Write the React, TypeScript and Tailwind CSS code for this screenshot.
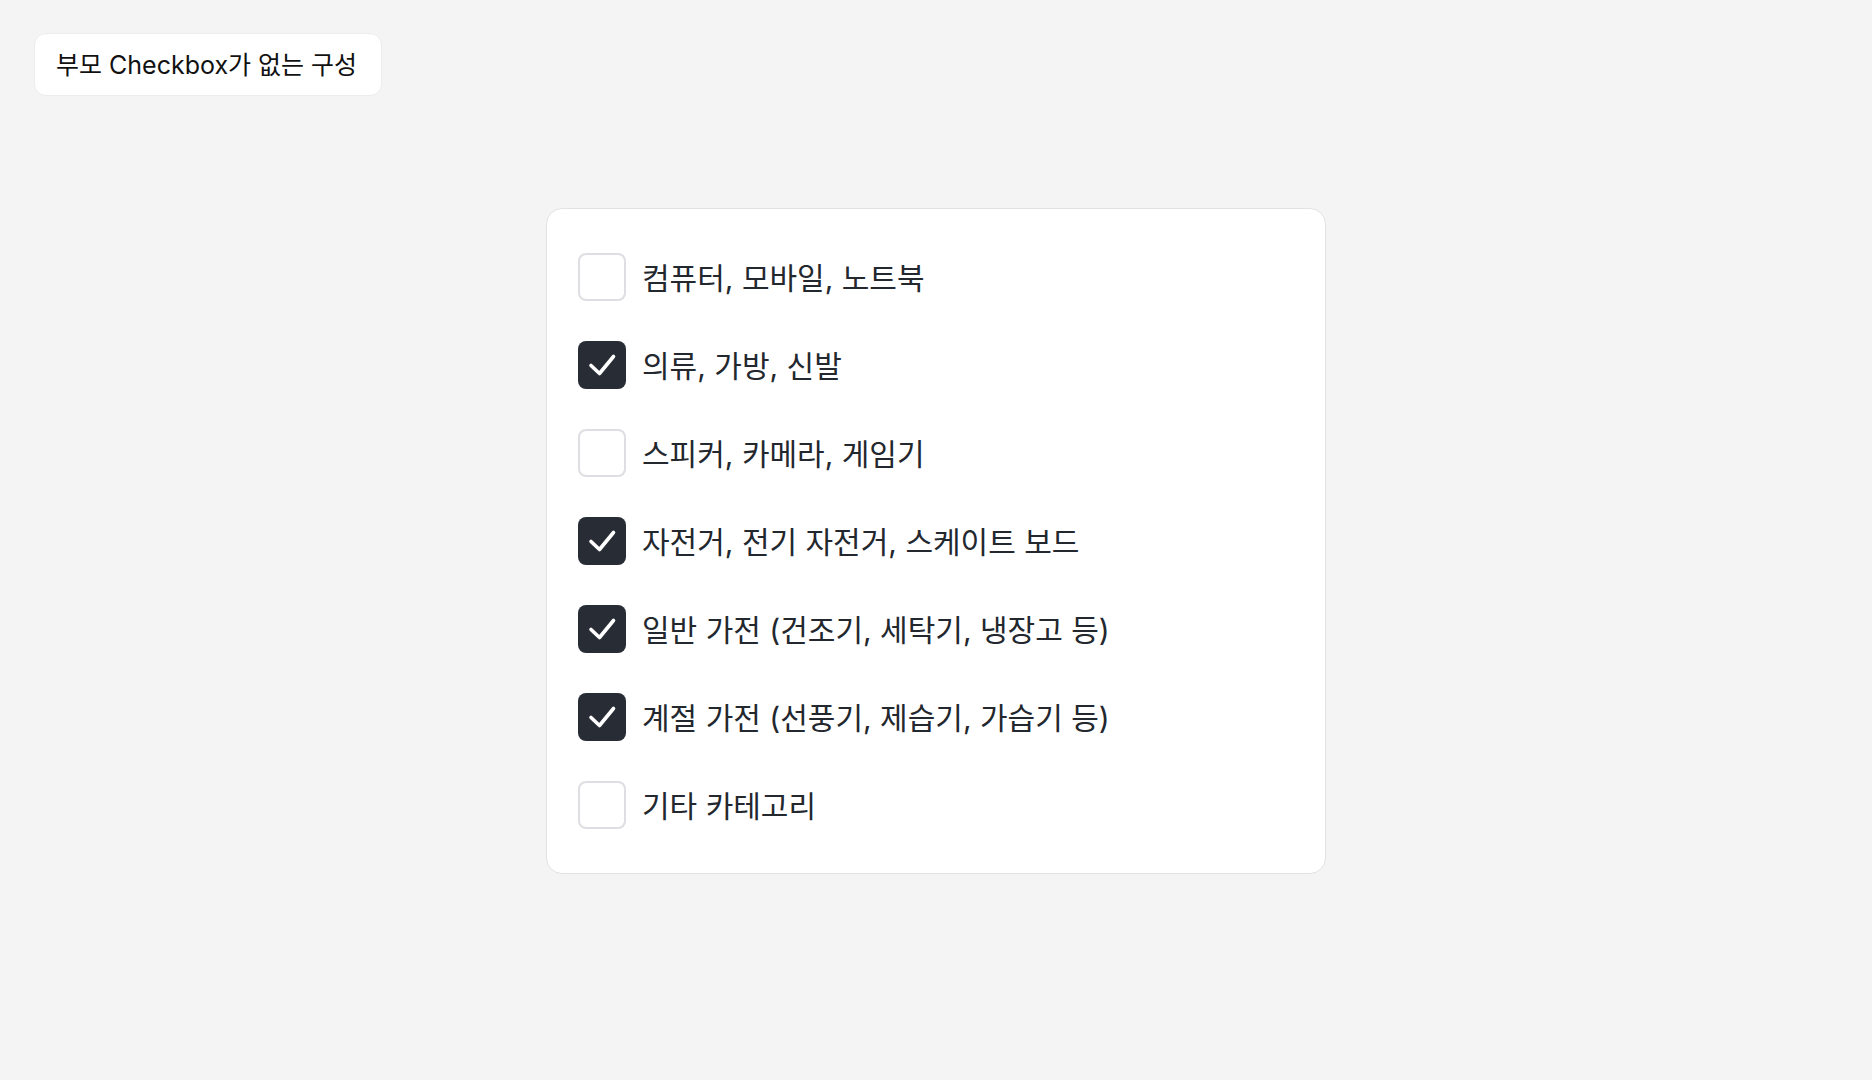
import React, { useState } from "react";

const items = [
  { label: "컴퓨터, 모바일, 노트북", checked: false },
  { label: "의류, 가방, 신발", checked: true },
  { label: "스피커, 카메라, 게임기", checked: false },
  { label: "자전거, 전기 자전거, 스케이트 보드", checked: true },
  { label: "일반 가전 (건조기, 세탁기, 냉장고 등)", checked: true },
  { label: "계절 가전 (선풍기, 제습기, 가습기 등)", checked: true },
  { label: "기타 카테고리", checked: false },
];

export default function App() {
  const [state, setState] = useState(items.map((i) => i.checked));
  return (
    <div
      className="min-h-screen w-full bg-[#f4f4f4] text-[#1f2329]"
      style={{ fontFamily: 'Inter, "Noto Sans CJK KR", sans-serif' }}
    >
      <div className="px-[34px] pt-[33px]">
        <div className="inline-flex h-[63px] w-[348px] items-center rounded-[12px] border border-[#ececec] bg-white pl-[21px] pt-[2px] text-[25px] text-[#111]">
          부모 Checkbox가 없는 구성
        </div>
      </div>
      <div className="mt-[112px] flex justify-center">
        <div className="flex w-[780px] flex-col gap-8 rounded-[16px] border-[1.5px] border-[#e2e2e2] bg-white px-[31px] py-[40px]">
          {items.map((it, i) => (
            <label key={i} className="flex h-14 cursor-pointer items-center gap-4">
              <span
                onClick={() => setState((s) => s.map((v, j) => (j === i ? !v : v)))}
                className={
                  state[i]
                    ? "flex h-12 w-12 shrink-0 items-center justify-center rounded-[8px] bg-[#272c35]"
                    : "flex h-12 w-12 shrink-0 items-center justify-center rounded-[8px] border-2 border-[#dedee3] bg-white"
                }
              >
                {state[i] && (
                  <svg width="48" height="48" viewBox="0 0 48 48" fill="none">
                    <path
                      d="M13 24.5 L21.5 32.5 L35.5 15.5"
                      stroke="white"
                      strokeWidth="3.6"
                      strokeLinecap="round"
                      strokeLinejoin="round"
                    />
                  </svg>
                )}
              </span>
              <span className="pt-[2px] text-[30px] text-[#23272e]">{it.label}</span>
            </label>
          ))}
        </div>
      </div>
    </div>
  );
}
